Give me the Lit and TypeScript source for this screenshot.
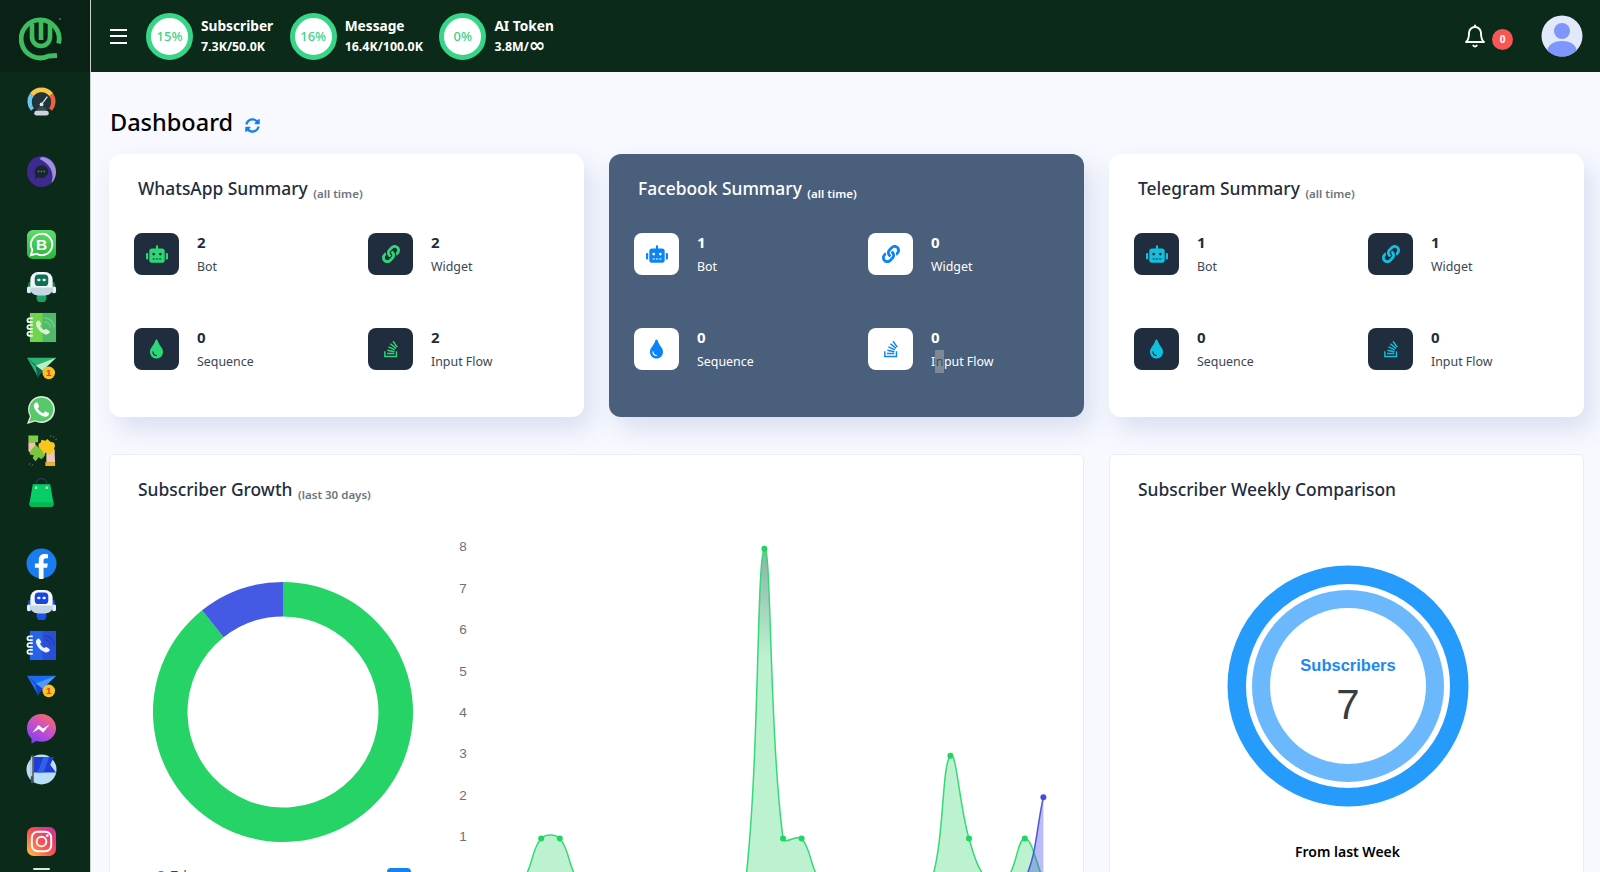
import { LitElement, html, css, svg } from "lit";
import { customElement } from "lit/decorators.js";

const ROBOT = "M32,224H64V416H32A31.96166,31.96166,0,0,1,0,384V256A31.96166,31.96166,0,0,1,32,224Zm512-48V448a64.06328,64.06328,0,0,1-64,64H160a64.06328,64.06328,0,0,1-64-64V176a79.974,79.974,0,0,1,80-80H288V32a32,32,0,0,1,64,0V96H464A79.974,79.974,0,0,1,544,176ZM264,256a40,40,0,1,0-40,40A39.997,39.997,0,0,0,264,256Zm-8,128H192v32h64Zm96,0H288v32h64ZM456,256a40,40,0,1,0-40,40A39.997,39.997,0,0,0,456,256Zm-8,128H384v32h64ZM640,256V384a31.96166,31.96166,0,0,1-32,32H576V224h32A31.96166,31.96166,0,0,1,640,256Z";
const LINK = "M326.612 185.391c59.747 59.809 58.927 155.698.36 214.59-.11.12-.24.25-.36.37l-67.2 67.2c-59.27 59.27-155.699 59.262-214.96 0-59.27-59.26-59.27-155.7 0-214.96l37.106-37.106c9.84-9.84 26.786-3.3 27.294 10.606.648 17.722 3.826 35.527 9.69 52.721 1.986 5.822.567 12.262-3.783 16.612l-13.087 13.087c-28.026 28.026-28.905 73.66-1.155 101.96 28.024 28.579 74.086 28.749 102.325.51l67.2-67.19c28.191-28.191 28.073-73.757 0-101.83-3.701-3.694-7.429-6.564-10.341-8.569a16.037 16.037 0 0 1-6.947-12.606c-.396-10.567 3.348-21.456 11.698-29.806l21.054-21.055c5.521-5.521 14.182-6.199 20.584-1.731a152.482 152.482 0 0 1 20.522 17.197zM467.547 44.449c-59.261-59.262-155.69-59.27-214.96 0l-67.2 67.2c-.12.12-.25.25-.36.37-58.566 58.892-59.387 154.781.36 214.59a152.454 152.454 0 0 0 20.521 17.196c6.402 4.468 15.064 3.789 20.584-1.731l21.054-21.055c8.35-8.35 12.094-19.239 11.698-29.806a16.037 16.037 0 0 0-6.947-12.606c-2.912-2.005-6.64-4.875-10.341-8.569-28.073-28.073-28.191-73.639 0-101.83l67.2-67.19c28.239-28.239 74.3-28.069 102.325.51 27.75 28.3 26.872 73.934-1.155 101.96l-13.087 13.087c-4.35 4.35-5.769 10.79-3.783 16.612 5.864 17.194 9.042 34.999 9.69 52.721.509 13.906 17.454 20.446 27.294 10.606l37.106-37.106c59.271-59.259 59.271-155.699.001-214.959z";
const TINT = "M205.22 22.09c-7.94-28.78-49.44-30.12-58.44 0C100.01 179.85 0 222.72 0 333.91 0 432.35 78.72 512 176 512s176-79.65 176-178.09c0-111.75-99.79-153.34-146.78-311.82zM176 448c-61.75 0-112-50.25-112-112 0-8.84 7.16-16 16-16s16 7.16 16 16c0 44.11 35.89 80 80 80 8.84 0 16 7.16 16 16s-7.16 16-16 16z";
const STACK = "M290.7 311L95 269.7 86.8 309l195.7 41zm51-87L188.2 95.7l-25.5 30.8 153.5 128.3zm-31.2 39.7L129.2 179l-16.7 36.5L293.7 300zM262 32l-32 24 119.3 160.3 32-24zm20.5 328h-200v39.7h200zm39.7 80H42.7V320h-40v160h359.5V320h-40z";
const SYNC = "M370.72 133.28C339.458 104.008 298.888 87.962 255.848 88c-77.458.068-144.328 53.178-162.791 126.85-1.344 5.363-6.122 9.15-11.651 9.15H24.103c-7.498 0-13.194-6.807-11.807-14.176C33.933 94.924 134.813 8 256 8c66.448 0 126.791 26.136 171.315 68.685L463.03 40.97C478.149 25.851 504 36.559 504 57.941V192c0 13.255-10.745 24-24 24H345.941c-21.382 0-32.09-25.851-16.971-40.971l41.75-41.749zM32 296h134.059c21.382 0 32.09 25.851 16.971 40.971l-41.75 41.75c31.262 29.273 71.835 45.319 114.876 45.28 77.418-.07 144.315-53.144 162.787-126.849 1.344-5.363 6.122-9.15 11.651-9.15h57.304c7.498 0 13.194 6.807 11.807 14.176C478.067 417.076 377.187 504 256 504c-66.448 0-126.791-26.136-171.315-68.685L48.97 471.03C33.851 486.149 8 475.441 8 454.059V320c0-13.255 10.745-24 24-24z";
const PHONE = "M22.9 19.3c-.4-.2-2.3-1.1-2.6-1.3-.4-.1-.6-.2-.9.2-.3.4-1 1.3-1.2 1.5-.2.3-.4.3-.8.1-.4-.2-1.6-.6-3.1-1.9-1.1-1-1.9-2.3-2.1-2.7-.2-.4 0-.6.2-.8.2-.2.4-.4.6-.7.2-.2.3-.4.4-.6.1-.3.1-.5 0-.7-.1-.2-.9-2.1-1.2-2.9-.3-.8-.6-.7-.9-.7h-.8c-.3 0-.7.1-1 .5-.4.4-1.4 1.3-1.4 3.2s1.4 3.7 1.6 4c.2.3 2.7 4.2 6.6 5.9.9.4 1.6.6 2.2.8.9.3 1.8.3 2.4.2.7-.1 2.3-.9 2.6-1.9.3-.9.3-1.7.2-1.9-.1-.2-.4-.3-.7-.5z";

function bookIcon(cover: string, spine: string, hand: string, waves: string) {
  return svg`<rect x="4" y="1" width="27" height="30" fill="${cover}"/><rect x="17" y="1" width="14" height="30" fill="${spine}"/>
    <g fill="none" stroke="#f2f6fa" stroke-width="1.900"><path d="M7 6.500H3.500a2 2 0 0 0 0 4H7"/><path d="M7 13.500H3.500a2 2 0 0 0 0 4H7"/><path d="M7 20.500H3.500a2 2 0 0 0 0 4H7"/></g>
    <g fill="none" stroke="${waves}" stroke-width="1.400"><path d="M19 10a6 6 0 0 1 6 6"/><path d="M19 6a10 10 0 0 1 10 10"/></g>
    <path transform="translate(9 7) scale(.72)" d="M3.5 3.5c1-1 2.4-1.300 3.100-.3l2.300 3.200c.6.8.4 1.900-.3 2.600l-1 1c1 2.500 3.200 5 6.200 6.200l1.300-1c.8-.6 1.800-.6 2.600 0l3.200 2.400c1 .8.800 2.300-.2 3.200-1.600 1.500-4 2-6 1.200C8 19.500 3.500 14.500 2 9c-.5-2 0-4 1.500-5.500z" fill="${hand}"/>`;
}
function botIcon(a: string, b: string, c: string) {
  return svg`<rect x="2" y="11" width="6" height="12" rx="3" fill="${b}"/><rect x="24" y="11" width="6" height="12" rx="3" fill="${b}"/>
    <path d="M11 24h10v4a5 5 0 0 1-10 0z" fill="${a}"/>
    <path d="M1 17a3 3 0 0 1 4 0v5a3 3 0 0 1-4 0z" fill="#e8eef3"/><path d="M27 17a3 3 0 0 1 4 0v5a3 3 0 0 1-4 0z" fill="#e8eef3"/>
    <rect x="4.500" y="1" width="23" height="24" rx="8" fill="#f4f8fb"/><path d="M4.500 17h23v1a7 7 0 0 1-7 7h-9a7 7 0 0 1-7-7z" fill="#c6d5e4"/>
    <rect x="9" y="3.500" width="14" height="12" rx="4" fill="${c}"/>
    <rect x="11.500" y="8" width="3.500" height="2.500" rx="1.200" fill="#e8fbf4"/><rect x="17" y="8" width="3.500" height="2.500" rx="1.200" fill="#e8fbf4"/>`;
}
function planeIcon(a: string, b: string, c: string) {
  return svg`<path d="M1 5h30L12 24z" fill="${a}"/><path d="M1 5l9 9 2 12 5-8z" fill="${b}"/><path d="M10 13L31 5 17 18z" fill="${c}"/>
    <circle cx="23.500" cy="20.500" r="6.500" fill="#f9c226"/><text x="23.500" y="24" font-size="10" font-weight="700" text-anchor="middle" fill="#e4392c" font-family="'Liberation Sans',sans-serif">1</text>`;
}

const ICONS: Record<string, unknown> = {
  gauge: svg`<path d="M7 24A12.500 12.500 0 0 1 6 9" fill="none" stroke="#6cc5ef" stroke-width="5"/><path d="M6 9A12.500 12.500 0 0 1 26 9" fill="none" stroke="#f8c64a" stroke-width="5"/><path d="M26 9A12.500 12.500 0 0 1 25 24" fill="none" stroke="#ef5f40" stroke-width="5"/>
    <circle cx="16" cy="17" r="10" fill="#22343a"/><path d="M16 19L22 11" stroke="#dfe6ee" stroke-width="1.300"/><circle cx="16" cy="19" r="2" fill="#dfe6ee"/><path d="M11 26a5 5 0 0 1 10 0z" fill="#3a4850"/><rect x="8.500" y="25.500" width="15" height="5" rx="2.500" fill="#cdd4de"/>`,
  purple: svg`<ellipse cx="16" cy="16" rx="15" ry="16" fill="#3c2a8e"/><path d="M16 1c8 0 15 7 15 15 0 5-2 10-5 12 1-3 2-6 1-10-1-6-5-11-13-15z" fill="#9f8fdd"/><path d="M9 16a7 6.500 0 0 1 14 0 7 6.500 0 0 1-10 6l-4 2 1-4a6 6 0 0 1-1-4z" fill="#1a2530"/><g fill="#5e6b78"><circle cx="13" cy="16" r="1"/><circle cx="16" cy="16" r="1"/><circle cx="19" cy="16" r="1"/></g>`,
  wab: svg`<defs><linearGradient id="wg" x1="0" y1="0" x2="0" y2="1"><stop offset="0" stop-color="#5fdc6c"/><stop offset="1" stop-color="#27b43d"/></linearGradient></defs><rect x="1" y="1" width="30" height="30" rx="6" fill="url(#wg)"/><path d="M16 5a11 11 0 0 0-9.400 16.600L5 27l5.600-1.500A11 11 0 1 0 16 5z" fill="none" stroke="#fff" stroke-width="2"/><text x="16" y="21.500" font-size="16" font-weight="700" text-anchor="middle" fill="#fff" font-family="'Liberation Sans',sans-serif">B</text>`,
  bot1: botIcon("#18a35f", "#1c7a55", "#0f6f55"),
  book1: bookIcon("#6fd64a", "#52b96c", "#d9f3d0", "#6fd18f"),
  plane1: planeIcon("#2bb673", "#14624c", "#b9eec8"),
  wa: svg`<path d="M16 2a14 14 0 0 0-12 21L1 31l8.500-2.500A14 14 0 1 0 16 2z" fill="#e7efe6"/><path d="M16 3.500A12.500 12.500 0 0 0 5.300 22.600L3.300 29l6.400-2A12.500 12.500 0 1 0 16 3.500z" fill="#58c86c"/><path d="${PHONE}" fill="#fff"/>`,
  puzzle: svg`<rect x="2.500" y="0.500" width="10" height="7" fill="#7bd044"/><path d="M2.500 7.500h7l1 7-5 5-3-3z" fill="#efc3aa"/><rect x="20" y="28" width="10" height="4.500" fill="#f6b21a"/><path d="M21 16h8.500l.5 12h-9z" fill="#e9c9bd"/>
    <path d="M4 17l6-7 3 3 3-1 1 4 3 3-1 3-3 3-3-2-3 4-3-3 1-3-4-1z" fill="#7cc63f"/><path d="M13 9l2-1 1-3 4 1 2-2 3 3 4 1 1 3-1 3 1 3-3 1-3 3-3-3-3 1-2-4-3-3z" fill="#f8c71e"/>
    <g stroke="#5f6f66" stroke-width=".9"><path d="M25 2l1-2"/><path d="M28 3l1-2"/><path d="M30 5l2-1"/><path d="M4 29l-1 2"/><path d="M7 30l-1 2"/></g>`,
  bag: svg`<path d="M10.500 11V7a5.500 5.500 0 0 1 11 0v4" fill="none" stroke="#203a50" stroke-width="1.600"/><path d="M7 7.500h18l3.500 20a3 3 0 0 1-3 3.500h-19a3 3 0 0 1-3-3.500z" fill="#07cd66"/><path d="M3.800 26h24.400l.3 1.500a3 3 0 0 1-3 3.500h-19a3 3 0 0 1-3-3.500z" fill="#05b659"/><circle cx="10.500" cy="11" r="1.300" fill="#c7e9d6"/><circle cx="21.500" cy="11" r="1.300" fill="#c7e9d6"/>`,
  fb: svg`<circle cx="16" cy="16" r="15.500" fill="#1b7cf0"/><path d="M21.800 20.500l.7-4.600h-4.400V13c0-1.300.6-2.500 2.600-2.500h2V6.600s-1.800-.3-3.500-.3c-3.600 0-6 2.200-6 6.100v3.500H9.200v4.600h4v11.300a16 16 0 0 0 4.900 0V20.500z" fill="#fff"/>`,
  bot2: botIcon("#1a4ff0", "#1a46dd", "#1746e0"),
  book2: bookIcon("#2463ea", "#2a4fd6", "#f2f5fb", "#1f3fb5"),
  plane2: planeIcon("#1a6cf5", "#1a3dd0", "#4d9bff"),
  msgr: svg`<defs><linearGradient id="mg" x1=".2" y1="1" x2=".8" y2="0"><stop offset="0" stop-color="#7b3ff2"/><stop offset=".5" stop-color="#c44fd0"/><stop offset="1" stop-color="#ff6a60"/></linearGradient></defs><path d="M16 1C7.500 1 1 7.300 1 15.700c0 4.400 1.800 8.200 4.700 10.800v5.200l4.800-2.700c1.700.5 3.500.7 5.500.7 8.500 0 15-6.300 15-14S24.500 1 16 1z" fill="url(#mg)"/><path d="M6.500 20.500l6.400-8.200 4.600 3.700 6.800-4.200-6.500 8.200-4.600-3.600z" fill="#fff"/>`,
  flag: svg`<circle cx="16" cy="16" r="15.500" fill="#b9dff7"/><path d="M5 1h3v29H5z" fill="#4a4f58"/><path d="M5 3h1.500v20H5z" fill="#c9ced6"/><path d="M8 3h21l-4 8 6 8H8z" fill="#1d3ed6"/><path d="M12 19l6-16h6l-6 16z" fill="#3060ea"/>`,
  ig: svg`<defs><linearGradient id="ig" x1="0" y1="1" x2="1" y2="0"><stop offset="0" stop-color="#fdc844"/><stop offset=".4" stop-color="#f9604b"/><stop offset=".75" stop-color="#e23a72"/><stop offset="1" stop-color="#b83bb5"/></linearGradient></defs><rect x="1" y="1" width="30" height="30" rx="7" fill="url(#ig)"/><rect x="6" y="6" width="20" height="20" rx="6" fill="none" stroke="#fff" stroke-width="2"/><circle cx="16" cy="16" r="5" fill="none" stroke="#fff" stroke-width="2"/><circle cx="22" cy="10" r="1.400" fill="#fff"/>`,
};

const SIDE_GROUPS = [
  { cls: "g1", items: ["gauge"] },
  { cls: "g2", items: ["purple"] },
  { cls: "g3", items: ["wab", "bot1", "book1", "plane1", "wa", "puzzle", "bag"] },
  { cls: "g4", items: ["fb", "bot2", "book2", "plane2", "msgr", "flag"] },
  { cls: "g5", items: ["ig"] },
];

const QUOTA = [
  { pct: "15%", name: "Subscriber", val: "7.3K/50.0K", inf: false },
  { pct: "16%", name: "Message", val: "16.4K/100.0K", inf: false },
  { pct: "0%", name: "AI Token", val: "3.8M/", inf: true },
];

const SUMMARY = [
  { title: "WhatsApp Summary", tone: "green", v: [2, 2, 0, 2] },
  { title: "Facebook Summary", tone: "blue", v: [1, 0, 0, 0] },
  { title: "Telegram Summary", tone: "cyan", v: [1, 1, 0, 0] },
];
const STATS = [
  { label: "Bot", d: ROBOT, box: "0 0 640 512", w: 22 },
  { label: "Widget", d: LINK, box: "0 0 512 512", w: 18 },
  { label: "Sequence", d: TINT, box: "0 0 352 512", w: 13 },
  { label: "Input Flow", d: STACK, box: "0 0 384 512", w: 14 },
];

const X0 = 64, STEP = 18.6, BASE = 347, UNIT = 41.4;
function curve(vals: number[]) {
  const pts = vals.map((v, i) => ({ x: X0 + i * STEP, y: BASE - v * UNIT }));
  const t = 0.4;
  const ctrl = pts.map((p, i) => {
    const a = pts[Math.max(i - 1, 0)], b = pts[Math.min(i + 1, pts.length - 1)];
    const d1 = Math.hypot(p.x - a.x, p.y - a.y), d2 = Math.hypot(b.x - p.x, b.y - p.y);
    const s = d1 + d2 || 1;
    const fa = (t * d1) / s, fb = (t * d2) / s;
    return {
      px: p.x - fa * (b.x - a.x), py: Math.min(BASE + 40, p.y - fa * (b.y - a.y)),
      nx: p.x + fb * (b.x - a.x), ny: Math.min(BASE + 40, p.y + fb * (b.y - a.y)),
    };
  });
  let d = `M${pts[0].x} ${pts[0].y}`;
  for (let i = 1; i < pts.length; i++) {
    d += `C${ctrl[i - 1].nx} ${ctrl[i - 1].ny} ${ctrl[i].px} ${ctrl[i].py} ${pts[i].x} ${pts[i].y}`;
  }
  return { d, pts };
}
const GREEN = new Array(30).fill(0);
GREEN[2] = 1; GREEN[3] = 1; GREEN[14] = 8; GREEN[15] = 1; GREEN[16] = 1; GREEN[24] = 3; GREEN[25] = 1; GREEN[28] = 1;
const BLUE = new Array(30).fill(0);
BLUE[29] = 2;

function ringPath(cx: number, cy: number, R: number, r: number, a0: number, a1: number) {
  const p = (rad: number, deg: number) => {
    const a = (deg * Math.PI) / 180;
    return `${cx + rad * Math.sin(a)} ${cy - rad * Math.cos(a)}`;
  };
  const large = a1 - a0 > 180 ? 1 : 0;
  return `M${p(R, a0)}A${R} ${R} 0 ${large} 1 ${p(R, a1)}L${p(r, a1)}A${r} ${r} 0 ${large} 0 ${p(r, a0)}Z`;
}

@customElement("app-root")
export class AppRoot extends LitElement {
  static styles = css`
    :host { display: flex; width: 100%; height: 100vh; overflow: hidden; background: #f7f9ff; font-family: "Noto Sans", "Open Sans", sans-serif; color: #1f2d3d; }
    .side { width: 90px; flex: none; background: #0b2a1a; border-right: 1px solid #c9d0cc; display: flex; flex-direction: column; align-items: center; }
    .logo { width: 100%; height: 72px; box-sizing: border-box; flex: none; background: #0a2215; display: flex; align-items: flex-start; padding: 16px 0 0 19px; }
    .logo svg { display: block; }
    .group { display: flex; flex-direction: column; width: 100%; }
    .g1 { margin-top: 9px; }
    .g2 { margin-top: 29px; }
    .g3 { margin-top: 32px; }
    .g4 { margin-top: 30px; }
    .g5 { margin-top: 31px; }
    .si { height: 41.2px; display: flex; align-items: center; justify-content: center; padding-right: 7px; }
    .si svg { width: 31px; height: 31px; display: block; }
    .homebar { width: 17px; height: 2px; border-radius: 1px; background: #dfe6e2; margin-top: 6px; margin-right: 7px; flex: none; }
    .main { flex: 1; min-width: 0; display: flex; flex-direction: column; }
    .top { height: 72px; flex: none; background: #0b2a1a; display: flex; align-items: center; padding-left: 19px; box-sizing: border-box; color: #fff; }
    .burger { width: 17px; height: 15px; flex: none; margin-right: 19px; display: flex; flex-direction: column; justify-content: space-between; }
    .burger i { display: block; height: 2px; background: #fff; }
    .quota { display: flex; align-items: center; gap: 8px; margin-right: 16.500px; }
    .ring { width: 47px; height: 47px; box-sizing: border-box; border: 5px solid #37d587; border-radius: 50%; background: #fff; color: #37d587; font-size: 13px; font-weight: 500; display: flex; align-items: center; justify-content: center; }
    .qname { font-size: 13.700px; font-weight: 700; line-height: 20px; }
    .qval { font-size: 12.400px; font-weight: 700; line-height: 20px; margin-top: 1px; white-space: nowrap; }
    .inf { font-family: "DejaVu Sans", sans-serif; font-size: 20px; font-weight: 700; line-height: 0; vertical-align: -1px; }
    .right { margin-left: auto; display: flex; align-items: center; }
    .bell { width: 24px; height: 24px; display: block; margin-right: 5px; }
    .badge { width: 21px; height: 21px; border-radius: 50%; background: #fb5454; color: #fff; font-size: 10px; font-weight: 700; display: flex; align-items: center; justify-content: center; margin-top: 6px; margin-right: 28px; }
    .avatar { width: 42px; height: 42px; display: block; margin-right: 17px; }
    .content { flex: 1; min-height: 0; padding: 32px 15px 0 18px; }
    h1 { margin: 0; height: 50px; display: flex; gap: 12px; font-size: 23.500px; font-weight: 500; color: #000; line-height: 36px; align-items: flex-start; padding-left: 1px; }
    h1 svg { width: 15px; height: 15px; color: #147ef6; margin-top: 14px; }
    .grid { display: grid; grid-template-columns: repeat(3, 475px); gap: 37px 25px; }
    .sum { height: 263px; box-sizing: border-box; background: #fff; border-radius: 12px; box-shadow: 8px 12px 24px rgba(70, 90, 160, .16); padding: 22px 25px 0; }
    .sum.blue { background: #4a5f7b; color: #fff; }
    .title { font-size: 17.400px; font-weight: 500; line-height: 24px; padding-left: 4px; }
    .title small { font-size: 11.500px; font-weight: 600; color: #6c7480; margin-left: 1px; vertical-align: -3px; }
    .blue .title small { color: #fff; }
    .stats { display: grid; grid-template-columns: 234px 1fr; row-gap: 53px; margin-top: 27px; }
    .stat { display: flex; gap: 18px; height: 42px; }
    .ib { width: 45px; height: 42px; border-radius: 8px; background: #1f2d3e; display: flex; align-items: center; justify-content: center; flex: none; }
    .ib svg { display: block; }
    .green .ib { color: #2dd775; }
    .blue .ib { background: #fff; color: #0d84f5; }
    .cyan .ib { color: #12bfdc; }
    .txt { margin-top: -2px; }
    .num { font-size: 15px; font-weight: 700; line-height: 22px; margin-bottom: 2px; }
    .lab { font-size: 12.400px; line-height: 23px; color: #3b4554; white-space: nowrap; }
    .blue .lab { color: #fff; }
    .sel { display: inline-block; height: 23px; line-height: 23px; padding: 0 .5px; background: #7f8994; color: #3c4a5a; vertical-align: top; }
    .chart { grid-column: span 2; }
    .panel { background: #fff; border: 1px solid #e9edf5; border-radius: 6px 6px 0 0; box-sizing: border-box; height: 500px; padding: 22px 28px 0; }
    .chart .title, .weekly .title { padding-left: 0; }
    .weekly { padding-right: 26px; }
    .row { display: flex; margin: 26px 0 0 -28px; }
    .donutbox { width: 260px; margin: 49px 0 0 43px; flex: none; }
    .donutbox svg, .line { display: block; }
    .legend { display: flex; align-items: flex-start; margin-top: 26px; font-size: 12px; line-height: 16px; color: #444; }
    .dot { width: 10px; height: 10px; border-radius: 50%; background: #1683f2; margin: 3px 5px 0 3px; flex: none; }
    .chip { width: 24px; height: 24px; border-radius: 4px; background: #1683f2; margin-left: auto; margin-right: 2px; }
    .line { margin-left: 27px; flex: none; }
    .radial { display: block; margin: 64px auto 0; }
    .from { text-align: center; font-size: 14px; font-weight: 600; color: #000; margin-top: 34px; line-height: 22px; }
    .axis { font: 13.500px "Liberation Sans", Arial, sans-serif; fill: #707070; }
  `;

  private renderStat(s: (typeof STATS)[number], v: number, highlight: boolean) {
    const label = highlight
      ? html`I<span class="sel">n</span>put Flow`
      : s.label;
    return html`<div class="stat">
      <div class="ib"><svg viewBox="${s.box}" width="${s.w}" height="20" fill="currentColor"><path d="${s.d}"/></svg></div>
      <div class="txt"><div class="num">${v}</div><div class="lab">${label}</div></div>
    </div>`;
  }

  render() {
    const g = curve(GREEN);
    const b = curve(BLUE);
    const close = (d: string, pts: { x: number }[]) => `${d}L${pts[pts.length - 1].x} ${BASE}L${pts[0].x} ${BASE}Z`;
    return html`
      <aside class="side">
        <div class="logo">
          <svg width="44" height="46" viewBox="0 0 44 46" fill="none" stroke="#3fbc60">
            <path d="M39.600 27.500A19 19 0 1 0 29 40.200L38 39.500" stroke-width="4.800"/>
            <path d="M13 8V21a9 9 0 0 0 18 0V8" stroke-width="4.600"/>
            <path d="M22 6V24" stroke-width="4.600"/>
            <circle cx="41" cy="3" r="1" fill="#5d6f64" stroke="none"/>
          </svg>
        </div>
        ${SIDE_GROUPS.map((grp) => html`<div class="group ${grp.cls}">
          ${grp.items.map((k) => html`<div class="si"><svg viewBox="0 0 32 32">${ICONS[k]}</svg></div>`)}
        </div>`)}
        <div class="homebar"></div>
      </aside>
      <div class="main">
        <header class="top">
          <div class="burger"><i></i><i></i><i></i></div>
          ${QUOTA.map((q) => html`<div class="quota">
            <div class="ring">${q.pct}</div>
            <div><div class="qname">${q.name}</div><div class="qval">${q.val}${q.inf ? html`<span class="inf">∞</span>` : ""}</div></div>
          </div>`)}
          <div class="right">
            <svg class="bell" viewBox="0 0 24 24" fill="none" stroke="#fff" stroke-width="1.900" stroke-linecap="round" stroke-linejoin="round">
              <path d="M18 9a6 6 0 0 0-12 0c0 7-3 9-3 9h18s-3-2-3-9"/><path d="M13.700 21.500a2 2 0 0 1-3.400 0"/><path d="M12 1.500V3"/>
            </svg>
            <div class="badge">0</div>
            <svg class="avatar" viewBox="0 0 42 42">
              <defs><clipPath id="av"><circle cx="21" cy="21" r="20.500"/></clipPath></defs>
              <circle cx="21" cy="21" r="20.500" fill="#e2e9fb"/>
              <g clip-path="url(#av)"><circle cx="21" cy="16" r="8" fill="#7f97fc"/><path d="M6 38c0-8 6-12 15-12s15 4 15 12v4H6z" fill="#7f97fc"/></g>
            </svg>
          </div>
        </header>
        <section class="content">
          <h1>Dashboard <svg viewBox="0 0 512 512" fill="currentColor"><path d="${SYNC}"/></svg></h1>
          <div class="grid">
            ${SUMMARY.map((c) => html`<div class="sum ${c.tone}">
              <div class="title">${c.title} <small>(all time)</small></div>
              <div class="stats">
                ${STATS.map((s, i) => this.renderStat(s, c.v[i], c.tone === "blue" && i === 3))}
              </div>
            </div>`)}
            <div class="panel chart">
              <div class="title">Subscriber Growth <small>(last 30 days)</small></div>
              <div class="row">
                <div class="donutbox">
                  <svg width="260" height="260" viewBox="0 0 260 260">
                    <path d="${ringPath(130, 130, 130, 95.5, 0, 321.5)}" fill="#25d366"/>
                    <path d="${ringPath(130, 130, 130, 95.5, 321.5, 360)}" fill="#4459e4"/>
                  </svg>
                  <div class="legend"><span class="dot"></span><span>Telegram</span><span class="chip"></span></div>
                </div>
                <svg class="line" width="640" height="400" viewBox="0 0 640 400">
                  <defs>
                    <linearGradient id="peak" gradientUnits="userSpaceOnUse" x1="0" y1="16" x2="0" y2="125">
                      <stop offset="0" stop-color="#86b3a6"/><stop offset="1" stop-color="#bdf2d0"/>
                    </linearGradient>
                  </defs>
                  ${[8, 7, 6, 5, 4, 3, 2, 1].map((n) => svg`<text class="axis" x="23" y="${BASE - n * UNIT + 2.5}" text-anchor="middle">${n}</text>`)}
                  <path d="${close(g.d, g.pts)}" fill="url(#peak)"/>
                  <path d="${g.d}" fill="none" stroke="#35d978" stroke-width="1.500"/>
                  <path d="${close(b.d, b.pts)}" fill="#4750e6" fill-opacity=".38"/>
                  <path d="${b.d}" fill="none" stroke="#4d55dc" stroke-width="1.500"/>
                  ${g.pts.filter((_, i) => GREEN[i] > 0).map((p) => svg`<circle cx="${p.x}" cy="${p.y}" r="3" fill="#1ed760"/>`)}
                  ${b.pts.filter((_, i) => BLUE[i] > 0).map((p) => svg`<circle cx="${p.x}" cy="${p.y}" r="3" fill="#3f4fdc"/>`)}
                </svg>
              </div>
            </div>
            <div class="panel weekly">
              <div class="title">Subscriber Weekly Comparison</div>
              <svg class="radial" width="242" height="242" viewBox="0 0 242 242">
                <circle cx="121" cy="121" r="111.250" fill="none" stroke="#259cfb" stroke-width="18.500"/>
                <circle cx="121" cy="121" r="87" fill="none" stroke="#6bb9fc" stroke-width="18"/>
                <text x="121" y="106" font-family="'Liberation Sans',sans-serif" font-size="16.500" font-weight="700" fill="#1e88f0" text-anchor="middle">Subscribers</text>
                <text x="121" y="154" font-family="'Liberation Sans',sans-serif" font-size="42" fill="#373d3f" text-anchor="middle">7</text>
              </svg>
              <div class="from">From last Week</div>
            </div>
          </div>
        </section>
      </div>
    `;
  }
}
